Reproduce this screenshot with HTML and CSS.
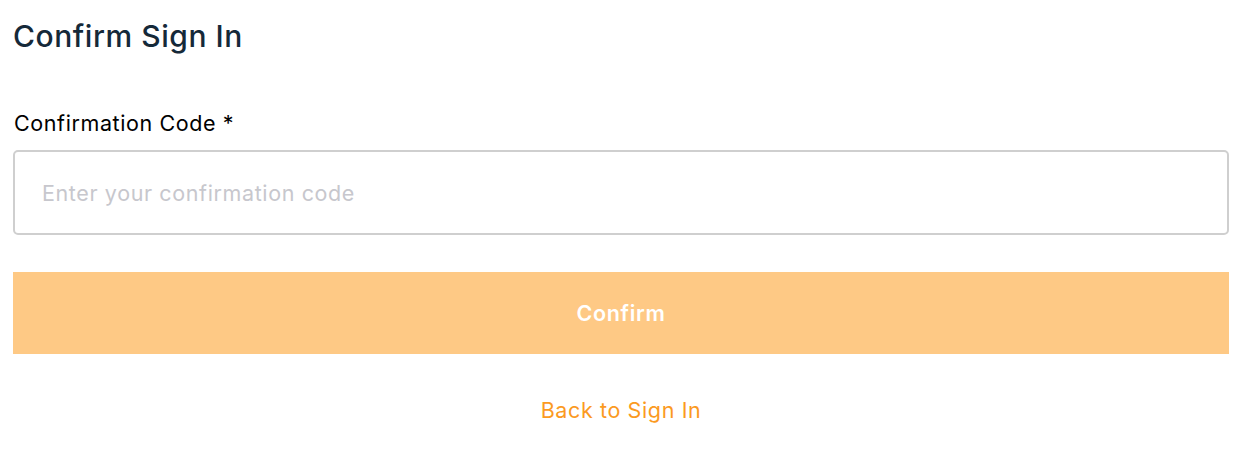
FILE: index.html
```html
<!DOCTYPE html>
<html>
<head>
<meta charset="utf-8">
<link rel="stylesheet" href="styles.css">
</head>
<body>
<div class="container">
  <h1 class="title">Confirm Sign In</h1>
  <div class="field">
    <label class="label">Confirmation Code *</label>
    <input class="input" type="text" placeholder="Enter your confirmation code">
  </div>
  <button class="button">Confirm</button>
  <div class="links">
    <a class="link">Back to Sign In</a>
  </div>
</div>
</body>
</html>
```
FILE: styles.css
```css
html, body {
  margin: 0;
  padding: 0;
  background: #ffffff;
}
body {
  font-family: Inter, "Noto Sans", sans-serif;
  width: 1258px;
  height: 452px;
  overflow: hidden;
}
.container {
  padding: 0 29px 0 13px;
  display: flex;
  flex-direction: column;
}
.title {
  margin: 16px 0 0 0;
  font-size: 30px;
  line-height: 40px;
  font-weight: 500;
  color: #152939;
  letter-spacing: 0.55px;
}
.field {
  margin-top: 53px;
  display: flex;
  flex-direction: column;
}
.label {
  font-size: 21.5px;
  line-height: 28px;
  color: #000000;
  margin-bottom: 13px;
  padding-left: 1px;
  letter-spacing: 0.6px;
}
.input {
  box-sizing: border-box;
  height: 85px;
  border: 2px solid #cfcfcf;
  border-radius: 5px;
  padding: 0 27px;
  font-family: inherit;
  font-size: 21.5px;
  letter-spacing: 0.62px;
  color: #000;
  outline: none;
}
.input::placeholder {
  color: #c7c7cd;
}
.button {
  margin-top: 37px;
  height: 82px;
  border: none;
  background: #fec985;
  color: #ffffff;
  font-family: inherit;
  font-size: 21.5px;
  font-weight: 600;
  letter-spacing: 0.7px;
  padding: 0;
}
.links {
  margin-top: 42px;
  display: flex;
  justify-content: center;
}
.link {
  font-size: 21.5px;
  line-height: 28px;
  letter-spacing: 0.62px;
  color: #fb9a1f;
  cursor: pointer;
}
```
